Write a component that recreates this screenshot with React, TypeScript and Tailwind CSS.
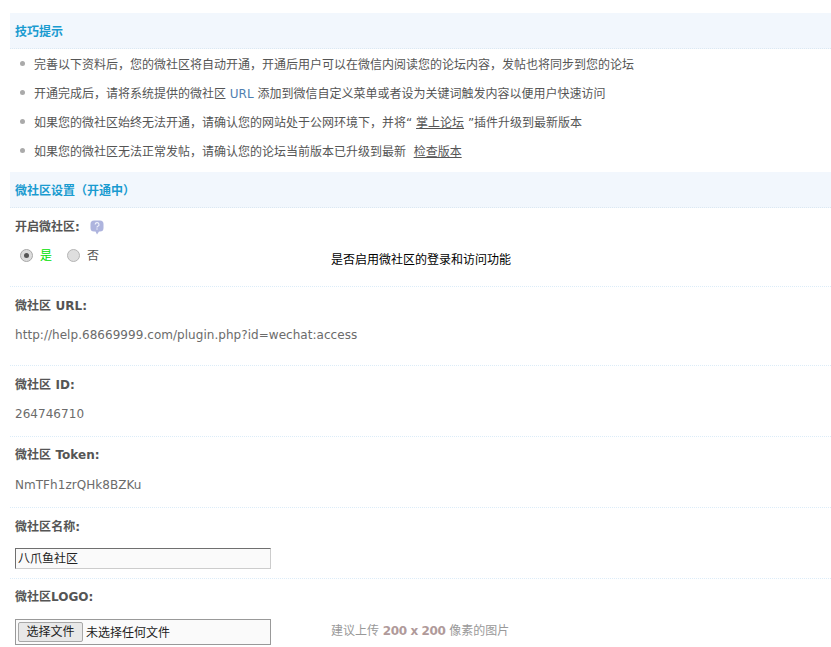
import React from "react";

const CJK = "font-['DejaVu_Sans','Noto_Sans_CJK_SC',sans-serif]";

function Header({ children }: { children: React.ReactNode }) {
  return (
    <div className="flex items-center h-[36px] pl-[5px] pt-[2px] bg-[#f2f7fd] border-b border-dotted border-[#dbe8f2] text-[12px] font-bold text-[#1a9bd0]">
      {children}
    </div>
  );
}

function Tip({ children }: { children: React.ReactNode }) {
  return (
    <li className="flex items-center h-[29px] pl-[10px] text-[12px] text-[#555555]">
      <span className="w-[5px] h-[5px] rounded-full bg-[#aaaaaa] mr-[9px] mb-[2px]" />
      <span>{children}</span>
    </li>
  );
}

function Row({ label, h, top, children }: { label: string; h: string; top: string; children: React.ReactNode }) {
  return (
    <div className={`flex flex-col ${h} pl-[5px] border-b border-dotted border-[#dcecf8]`}>
      <div className={`h-[18px] ${top} leading-[18px] text-[12px] font-bold text-[#555555] tracking-[0.05px]`}>{label}</div>
      {children}
    </div>
  );
}

function Value({ mt, children }: { mt: string; children: React.ReactNode }) {
  return <div className={`${mt} h-[18px] leading-[18px] text-[12px] text-[#6b6b6b] tracking-[0.04px]`}>{children}</div>;
}

export default function App() {
  return (
    <div className={`w-[831px] h-[647px] overflow-hidden bg-white pt-[13px] pl-[10px] ${CJK}`}>
      <Header>技巧提示</Header>
      <ul className="pt-[1px] pb-[6px]">
        <Tip>完善以下资料后，您的微社区将自动开通，开通后用户可以在微信内阅读您的论坛内容，发帖也将同步到您的论坛</Tip>
        <Tip>
          开通完成后，请将系统提供的微社区 <span className="text-[#4f7fb0]">URL</span> 添加到微信自定义菜单或者设为关键词触发内容以便用户快速访问
        </Tip>
        <Tip>
          如果您的微社区始终无法开通，请确认您的网站处于公网环境下，并将“ <span className="underline">掌上论坛</span> ”插件升级到最新版本
        </Tip>
        <Tip>
          如果您的微社区无法正常发帖，请确认您的论坛当前版本已升级到最新&nbsp; <span className="underline">检查版本</span>
        </Tip>
      </ul>
      <Header>微社区设置（开通中）</Header>

      <div className="flex flex-col h-[79px] pl-[5px] border-b border-dotted border-[#dcecf8]">
        <div className="flex items-center mt-[10px] h-[18px] text-[12px] font-bold text-[#555555]">
          开启微社区:
          <svg className="ml-[10px]" width="14" height="15" viewBox="0 0 14 15">
            <path d="M4 0.5h6a3.5 3.5 0 0 1 3.5 3.5v4a3.5 3.5 0 0 1-3.5 3.5h-1l-2 3-1.5-3H4A3.5 3.5 0 0 1 .5 8V4A3.5 3.5 0 0 1 4 .5z" fill="#aeb4de" />
            <path d="M5.2 4.6a1.9 1.9 0 1 1 2.6 1.7c-.5.3-.8.5-.8 1.2" fill="none" stroke="#eef0fa" strokeWidth="1.2" />
            <rect x="6.4" y="8.4" width="1.2" height="1.2" fill="#eef0fa" />
          </svg>
        </div>
        <div className="flex items-center mt-[9px] h-[20px] text-[12px]">
          <span className="ml-[5px] flex items-center justify-center w-[13px] h-[13px] rounded-full border border-[#a8a8a8] bg-[#dcdcdc]">
            <span className="w-[5px] h-[5px] rounded-full bg-[#555555]" />
          </span>
          <span className="ml-[7px] mt-[2px] text-[#00e000]">是</span>
          <span className="ml-[15px] w-[13px] h-[13px] rounded-full border border-[#b5b5b5] bg-[#dedede]" />
          <span className="ml-[7px] mt-[2px] text-[#555555]">否</span>
          <span className="ml-[232px] mt-[10px] text-black">是否启用微社区的登录和访问功能</span>
        </div>
      </div>

      <Row label="微社区 URL:" h="h-[79px]" top="mt-[10px]">
        <Value mt="mt-[11px]">http://help.68669999.com/plugin.php?id=wechat:access</Value>
      </Row>
      <Row label="微社区 ID:" h="h-[71px]" top="mt-[10px]">
        <Value mt="mt-[11px]">264746710</Value>
      </Row>
      <Row label="微社区 Token:" h="h-[71px]" top="mt-[9px]">
        <Value mt="mt-[12px]">NmTFh1zrQHk8BZKu</Value>
      </Row>
      <Row label="微社区名称:" h="h-[71px]" top="mt-[10px]">
        <div className="mt-[12px] flex items-center w-[256px] h-[21px] pl-[2px] pt-[1px] border border-t-[#6f6f6f] border-l-[#6f6f6f] border-r-[#cccccc] border-b-[#cccccc] bg-[#fafafa] text-[12px] text-[#222222]">
          八爪鱼社区
        </div>
      </Row>
      <div className="flex flex-col pl-[5px]">
        <div className="h-[18px] mt-[9px] leading-[18px] text-[12px] font-bold text-[#555555]">微社区LOGO:</div>
        <div className="flex items-center mt-[13px]">
          <div className="flex items-center w-[256px] h-[26px] pl-[2px] border border-[#999999] bg-[#fafafa] text-[12px] text-[#222222]">
            <span className="flex items-center justify-center w-[65px] h-[20px] rounded-[2px] border border-[#a8a8a8] bg-[#e8e8e8]">选择文件</span>
            <span className="ml-[3px] mt-[2px]">未选择任何文件</span>
          </div>
          <span className="ml-[60px] mb-[2px] text-[12px] text-[#999999]">
            建议上传 <span className="font-bold text-[#b09a9a] tracking-[-0.4px]">200 x 200</span> 像素的图片
          </span>
        </div>
      </div>
    </div>
  );
}
